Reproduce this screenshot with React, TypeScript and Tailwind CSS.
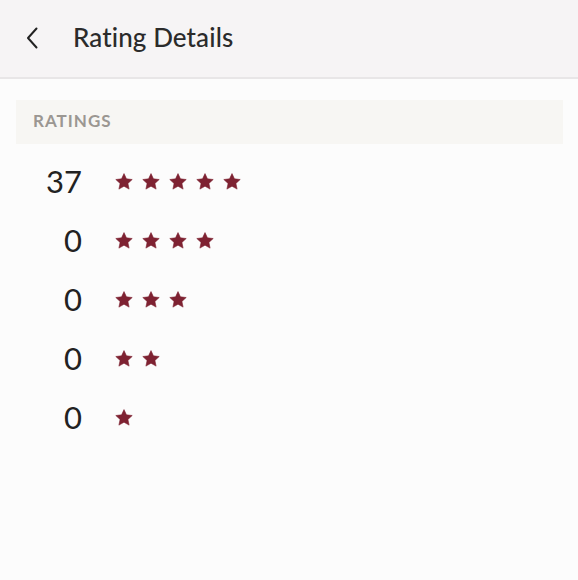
const ratings = [
  { stars: 5, count: 37 },
  { stars: 4, count: 0 },
  { stars: 3, count: 0 },
  { stars: 2, count: 0 },
  { stars: 1, count: 0 },
];

const Star = () => (
  <svg width="18" height="17" viewBox="0 0 24 23" className="shrink-0">
    <path
      d="M12 0.8l3.3 7.1 7.8 0.9-5.8 5.3 1.6 7.7L12 17.9l-6.9 3.9 1.6-7.7L0.9 8.8l7.8-0.9z"
      fill="#7e2232"
      stroke="#7e2232"
      strokeWidth="0.8"
      strokeLinejoin="round"
    />
  </svg>
);

const App = () => {
  return (
    <div className="flex min-h-[580px] w-full flex-col bg-[#fcfcfc] font-['Lato',sans-serif]">
      <header className="flex h-[79px] items-center border-b-2 border-[#e8e6e7] bg-[#f6f4f5] pb-[2px]">
        <button className="ml-[22px] flex h-[24px] w-[20px] items-center justify-center">
          <svg width="14" height="22" viewBox="0 0 14 22" fill="none">
            <path d="M11.5 1.5L3 11l8.5 9.5" stroke="#222" strokeWidth="2" strokeLinecap="round" strokeLinejoin="round" />
          </svg>
        </button>
        <h1 className="ml-[31px] text-[26px] font-medium tracking-[0.1px] text-[#2b2b2b]">Rating Details</h1>
      </header>

      <div className="pl-[16px] pr-[15px] pt-[21px]">
        <div className="flex h-[44px] items-center bg-[#f7f6f3] px-[17px]">
          <span className="-mt-[2px] text-[17px] font-bold tracking-[1px] text-[#9b9792]">RATINGS</span>
        </div>

        <div className="flex flex-col pt-[8px]">
          {ratings.map((r) => (
            <div key={r.stars} className="flex h-[59px] items-center">
              <span className="w-[66px] text-right text-[31px] font-normal leading-none text-[#222]">{r.count}</span>
              <div className="ml-[33px] flex gap-[9px]">
                {Array.from({ length: r.stars }).map((_, i) => (
                  <Star key={i} />
                ))}
              </div>
            </div>
          ))}
        </div>
      </div>
    </div>
  );
};

export default App;
